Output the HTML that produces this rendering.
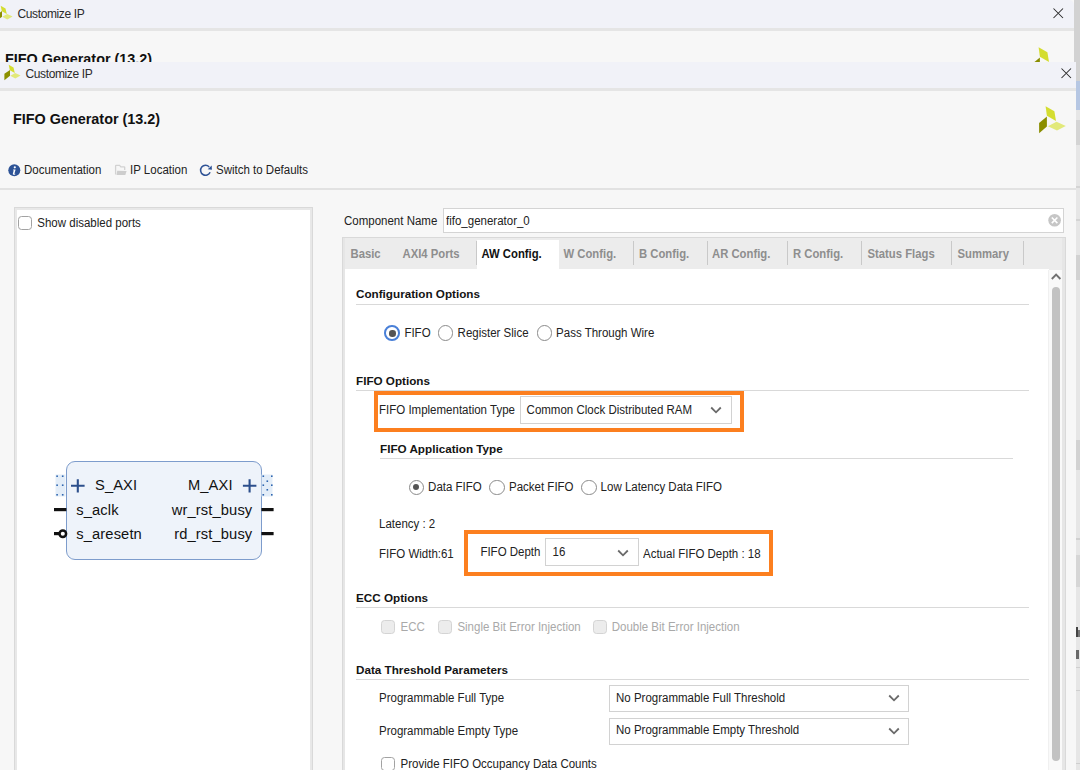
<!DOCTYPE html>
<html><head><meta charset="utf-8">
<style>
*{margin:0;padding:0;box-sizing:border-box}
html,body{width:1080px;height:770px;overflow:hidden;background:#f7f7f7;font-family:"Liberation Sans",sans-serif;color:#222}
.a{position:absolute;white-space:nowrap}
.t{position:absolute;white-space:nowrap;font-size:11.5px;line-height:14px;color:#222;transform:scaleY(1.1);transform-origin:0 11px}
.h{position:absolute;white-space:nowrap;font-size:11.7px;line-height:14px;font-weight:bold;color:#141414}
.tab{position:absolute;white-space:nowrap;font-size:11.3px;line-height:14px;font-weight:bold;color:#8e8e8e;transform:scaleY(1.06);transform-origin:0 10.8px}
.hl{position:absolute;height:1px;background:#d9d9d9}
.dd{position:absolute;background:#fff;border:1px solid #d2d2d2}
.rb{position:absolute;width:15.6px;height:15.6px;border-radius:50%;border:1.4px solid #8a8a8a;background:#fff}
.rb.on::after{content:"";position:absolute;left:3.2px;top:3.2px;width:6.4px;height:6.4px;border-radius:50%;background:#555}
.cb{position:absolute;width:14px;height:14px;border-radius:3.5px;border:1.7px solid #a2a2a2;background:#fff}
.cb.dis{background:#ececec;border-color:#d4d4d4}
.ob{position:absolute;border:4px solid #fc7f1f}
.sep{position:absolute;width:1px;height:24px;background:#c9c9c9;top:241px}
.chev{position:absolute}
.bt{position:absolute;white-space:nowrap;font-size:14.7px;letter-spacing:0.12px;line-height:17px;color:#111}
.br{text-align:right}
</style></head><body>
<!-- background strip right -->
<div class="a" style="left:1074px;top:0;width:6px;height:770px;background:#e6e6e6"></div>
<div class="a" style="left:1074px;top:0;width:6px;height:81px;background:#d2d2d2"></div>
<div class="a" style="left:1076px;top:81px;width:4px;height:29px;background:#b6c7e3"></div>
<div class="a" style="left:1076px;top:120px;width:4px;height:25px;background:#d4d4d4"></div>
<div class="a" style="left:1076px;top:186px;width:4px;height:2px;background:#d4d4d4"></div>
<div class="a" style="left:1076px;top:219px;width:4px;height:2px;background:#d4d4d4"></div>
<div class="a" style="left:1076px;top:255px;width:4px;height:25px;background:#d2d2d2"></div>
<div class="a" style="left:1076px;top:440px;width:4px;height:30px;background:#d2d2d2"></div>
<div class="a" style="left:1076px;top:538px;width:4px;height:2px;background:#d0d0d0"></div>
<div class="a" style="left:1076px;top:555px;width:4px;height:32px;background:#d6d6d6"></div>
<div class="a" style="left:1076px;top:627px;width:1.5px;height:10px;background:#444"></div><div class="a" style="left:1078px;top:630px;width:2px;height:7px;background:#777"></div>
<div class="a" style="left:1076px;top:650px;width:3px;height:9px;background:#6a6a6a"></div>
<div class="a" style="left:1076px;top:667px;width:4px;height:1px;background:#cfcfcf"></div>
<div class="a" style="left:1076px;top:690px;width:4px;height:1px;background:#cfcfcf"></div>
<div class="a" style="left:1076px;top:763px;width:4px;height:1px;background:#cfcfcf"></div>
<!-- BACK WINDOW -->
<div class="a" style="left:0;top:0;width:1074px;height:62px;background:#f7f7f7;border-top-right-radius:5px;overflow:hidden">
  <div class="a" style="left:0;top:0;width:1074px;height:28px;background:#f1f2f8"></div>
  <div class="a" style="left:0;top:28px;width:1074px;height:3px;background:#e5e5e5"></div>
  <svg class="a" style="left:-7.6px;top:0.6px" width="24" height="24" viewBox="0 0 24 24">
    <polygon points="8.7,4.7 13.5,7.6 14.8,12.9 9.8,10.2" fill="#d4dd30"/>
    <polygon points="10,10.1 10,15.8 4.4,20.2 4.4,13.8" fill="#8c9000"/>
    <polygon points="10.3,15.7 15.2,12.9 20.6,15.6 15.3,18.5" fill="#e2e97a"/>
  </svg>
  <div class="a" style="left:17.5px;top:6.9px;font-size:12px;letter-spacing:-0.38px;line-height:14px;color:#2a2a2a">Customize IP</div>
  <svg class="a" style="left:1053px;top:8px" width="11" height="11" viewBox="0 0 11 11"><path d="M0.5,0.5 L10,10 M10,0.5 L0.5,10" stroke="#2a2a2a" stroke-width="1.05"/></svg>
  <div class="a" style="left:5px;top:51.2px;font-size:14.4px;line-height:17px;font-weight:bold;color:#111">FIFO Generator (13.2)</div>
  <svg class="a" style="left:1022.6px;top:40.9px" width="40" height="40" viewBox="0 0 40 40">
    <polygon points="15.6,6.2 24.4,11.2 26,21 16.9,15.8" fill="#d4dd30"/>
    <polygon points="16.9,16.6 16.9,26.5 9.1,33.2 9.1,22.9" fill="#8a8e00"/>
    <polygon points="17.9,26.2 26.5,21.8 35.8,26 27,30.6" fill="#e2e97a"/>
  </svg>
</div>

<!-- FRONT WINDOW base -->
<div class="a" style="left:0;top:62px;width:1076px;height:708px;background:#f7f7f7"></div>
<div class="a" style="left:0;top:62px;width:1076px;height:26px;background:#f1f2f8"></div>
<div class="a" style="left:0;top:88px;width:1076px;height:3px;background:#e5e5e5"></div>
<svg class="a" style="left:0px;top:60px" width="24" height="24" viewBox="0 0 24 24">
    <polygon points="8.7,4.7 13.5,7.6 14.8,12.9 9.8,10.2" fill="#d4dd30"/>
    <polygon points="10,10.1 10,15.8 4.4,20.2 4.4,13.8" fill="#8c9000"/>
    <polygon points="10.3,15.7 15.2,12.9 20.6,15.6 15.3,18.5" fill="#e2e97a"/>
</svg>
<div class="a" style="left:25.5px;top:66.5px;font-size:12px;letter-spacing:-0.38px;line-height:14px;color:#2a2a2a">Customize IP</div>
<svg class="a" style="left:1060.5px;top:67.5px" width="11" height="11" viewBox="0 0 11 11"><path d="M0.5,0.5 L10,10 M10,0.5 L0.5,10" stroke="#2a2a2a" stroke-width="1.05"/></svg>

<div class="a" style="left:13px;top:110.8px;font-size:14.4px;line-height:17px;font-weight:bold;color:#111">FIFO Generator (13.2)</div>
<svg class="a" style="left:1030px;top:100px" width="40" height="40" viewBox="0 0 40 40">
  <polygon points="15.6,6.2 24.4,11.2 26,21 16.9,15.8" fill="#d4dd30"/>
  <polygon points="16.9,16.6 16.9,26.5 9.1,33.2 9.1,22.9" fill="#8a8e00"/>
  <polygon points="17.9,26.2 26.5,21.8 35.8,26 27,30.6" fill="#e2e97a"/>
</svg>

<!-- toolbar -->
<svg class="a" style="left:7.6px;top:163.8px" width="13" height="13" viewBox="0 0 13 13">
  <circle cx="6.3" cy="6.3" r="6" fill="#2d5396"/>
  <circle cx="6.8" cy="3.3" r="1.1" fill="#fff"/>
  <path d="M5.2,5.6 L7.6,5.4 L6.5,9.6 Q6.4,10.2 7.4,9.8 L7.2,10.4 Q5.9,11 5,10.6 Q4.6,10.3 4.9,9.6 L5.7,6.3 L5.1,6.2 Z" fill="#fff"/>
</svg>
<div class="t" style="left:24px;top:162.5px">Documentation</div>
<svg class="a" style="left:110px;top:160px" width="25" height="20" viewBox="0 0 25 20">
  <path d="M5.6,14.5 V5.9 Q5.6,5.4 6.1,5.4 H9.6 L10.8,6.8 H14.2 Q14.7,6.8 14.7,7.3 V10" fill="none" stroke="#d2d2d2" stroke-width="1.3"/>
  <path d="M7.2,10.8 L16.6,10.9 L15.3,15 L6.5,15.1 Z" fill="#cdcdcd"/>
</svg>
<div class="t" style="left:130px;top:162.5px">IP Location</div>
<svg class="a" style="left:196px;top:160px" width="25" height="20" viewBox="0 0 25 20">
  <path d="M13.2,6.9 A4.95,4.95 0 1 0 14.1,12.2" fill="none" stroke="#2f5396" stroke-width="1.55"/>
  <path d="M15.7,5.6 L15.9,9.7 L11.7,9.3 Z" fill="#2f5396"/>
</svg>
<div class="t" style="left:216px;top:162.5px">Switch to Defaults</div>
<div class="a" style="left:0;top:188px;width:1076px;height:2px;background:#e2e2e2"></div>

<!-- left panel -->
<div class="a" style="left:14px;top:207px;width:299px;height:600px;background:#fff;border:1px solid #d9d9d9"></div>
<div class="a" style="left:15px;top:208px;width:297px;height:600px;border:2px solid #e8e8e8"></div>
<div class="cb" style="left:17.9px;top:215.8px"></div>
<div class="t" style="left:37.3px;top:215.7px">Show disabled ports</div>

<!-- block -->
<div class="a" style="left:66px;top:461px;width:196px;height:99px;background:#eef3fa;border:1px solid #7d9ccc;border-radius:9px"></div>
<svg class="a" style="left:54px;top:472px" width="222" height="70" viewBox="0 0 222 70">
  <!-- left handle -->
  <rect x="1.5" y="2.5" width="10" height="22" fill="#e3edf8"/>
  <g fill="#2f66b0">
    <rect x="2.3" y="3.4" width="1.6" height="1.6"/><rect x="7.9" y="3.4" width="1.6" height="1.6"/>
    <rect x="2.3" y="12.4" width="1.6" height="1.6"/><rect x="7.9" y="12.4" width="1.6" height="1.6"/>
    <rect x="2.3" y="22" width="1.6" height="1.6"/><rect x="7.9" y="22" width="1.6" height="1.6"/>
  </g>
  <!-- right handle -->
  <rect x="207.5" y="2.5" width="11" height="22" fill="#e3edf8"/>
  <g fill="#2f66b0">
    <rect x="208.5" y="3.4" width="1.6" height="1.6"/><rect x="217" y="3.4" width="1.6" height="1.6"/>
    <rect x="212.5" y="8.4" width="1.6" height="1.6"/>
    <rect x="208.5" y="12.4" width="1.6" height="1.6"/><rect x="217" y="12.4" width="1.6" height="1.6"/>
    <rect x="212.5" y="17" width="1.6" height="1.6"/>
    <rect x="208.5" y="22" width="1.6" height="1.6"/><rect x="217" y="22" width="1.6" height="1.6"/>
  </g>
  <!-- plus signs -->
  <path d="M17,13.8 H30.6 M23.8,7.3 V20.4" stroke="#2c4f8c" stroke-width="2.1"/>
  <path d="M188.9,13.8 H202.4 M195.6,7.3 V20.4" stroke="#2c4f8c" stroke-width="2.1"/>
  <!-- wires -->
  <rect x="0" y="36" width="12.4" height="3.2" fill="#111"/>
  <rect x="207.4" y="36" width="12.2" height="3.2" fill="#111"/>
  <rect x="207.4" y="60" width="12.2" height="3.2" fill="#111"/>
  <rect x="0" y="60" width="6" height="3.2" fill="#111"/>
  <circle cx="8.8" cy="61.8" r="3.3" fill="#fff" stroke="#111" stroke-width="2.5"/>
</svg>
<div class="bt" style="left:95px;top:477.3px">S_AXI</div>
<div class="bt br" style="right:847.4px;top:477.3px">M_AXI</div>
<div class="bt" style="left:76.3px;top:501.8px">s_aclk</div>
<div class="bt br" style="right:827.7px;top:501.8px">wr_rst_busy</div>
<div class="bt" style="left:76.3px;top:525.7px">s_aresetn</div>
<div class="bt br" style="right:827.7px;top:525.7px">rd_rst_busy</div>

<!-- right side -->
<div class="t" style="left:344px;top:213.9px">Component Name</div>
<div class="a" style="left:443px;top:208px;width:621px;height:25px;background:#fff;border:1px solid #d4d4d4"></div>
<div class="t" style="left:446px;top:213.9px">fifo_generator_0</div>
<svg class="a" style="left:1048px;top:214px" width="14" height="14" viewBox="0 0 14 14">
  <circle cx="6.6" cy="6.3" r="6.3" fill="#c6c6c6"/>
  <path d="M3.8,3.5 L9.4,9.1 M9.4,3.5 L3.8,9.1" stroke="#fff" stroke-width="1.6"/>
</svg>

<!-- tab container -->
<div class="a" style="left:342px;top:237px;width:724px;height:540px;background:#ececec;border:1px solid #d9d9d9"></div>
<div class="a" style="left:343px;top:238px;width:722px;height:540px;border:2px solid #e6e6e6;border-top:none;border-right:3px solid #e6e6e6"></div>
<div class="a" style="left:345px;top:269px;width:704px;height:510px;background:#fff"></div>
<div class="a" style="left:477px;top:240px;width:82px;height:30px;background:#fff"></div>
<div class="sep" style="left:476px"></div>
<div class="sep" style="left:633px"></div>
<div class="sep" style="left:707px"></div>
<div class="sep" style="left:787px"></div>
<div class="sep" style="left:861px"></div>
<div class="sep" style="left:951px"></div>
<div class="sep" style="left:1023px"></div>
<div class="tab" style="left:350.5px;top:246.6px">Basic</div>
<div class="tab" style="left:402.5px;top:246.6px">AXI4 Ports</div>
<div class="tab" style="left:481.5px;top:246.6px;color:#111">AW Config.</div>
<div class="tab" style="left:563.5px;top:246.6px">W Config.</div>
<div class="tab" style="left:639px;top:246.6px">B Config.</div>
<div class="tab" style="left:712px;top:246.6px">AR Config.</div>
<div class="tab" style="left:793px;top:246.6px">R Config.</div>
<div class="tab" style="left:867.5px;top:246.6px">Status Flags</div>
<div class="tab" style="left:957.5px;top:246.6px">Summary</div>

<!-- scrollbar -->
<div class="a" style="left:1048px;top:270px;width:14px;height:500px;background:#f9f9f9;border-left:1px solid #f0f0f0"></div>
<svg class="a" style="left:1050px;top:272px" width="13" height="10" viewBox="0 0 13 10"><path d="M1.8,7 L6.1,2.6 L10.4,7" fill="none" stroke="#707070" stroke-width="1.9"/></svg>
<div class="a" style="left:1051.6px;top:286.8px;width:8px;height:474px;background:#c2c2c2;border-radius:4px"></div>

<div class="h" style="left:356px;top:287.4px">Configuration Options</div>
<div class="hl" style="left:356px;top:304px;width:673px"></div>
<div class="rb on" style="left:384.2px;top:325px;border:2px solid #4a80d8"></div>
<div class="t" style="left:404.4px;top:325.6px">FIFO</div>
<div class="rb" style="left:437.6px;top:325.3px"></div>
<div class="t" style="left:457.6px;top:325.6px">Register Slice</div>
<div class="rb" style="left:536.6px;top:325.3px"></div>
<div class="t" style="left:556.1px;top:325.6px">Pass Through Wire</div>

<div class="h" style="left:356px;top:373.6px">FIFO Options</div>
<div class="hl" style="left:356px;top:390px;width:673px"></div>

<div class="ob" style="left:374px;top:391px;width:370px;height:41px"></div>
<div class="t" style="left:379px;top:402.7px">FIFO Implementation Type</div>
<div class="dd" style="left:520px;top:396px;width:212px;height:28px"></div>
<div class="t" style="left:526.6px;top:402.7px">Common Clock Distributed RAM</div>
<svg class="chev" style="left:709px;top:405px" width="14" height="10" viewBox="0 0 14 10"><path d="M2.2,2.5 L7,7.3 L11.8,2.5" fill="none" stroke="#6a6a6a" stroke-width="1.8"/></svg>

<div class="h" style="left:380px;top:441.8px">FIFO Application Type</div>
<div class="hl" style="left:380px;top:458px;width:633px"></div>
<div class="rb on" style="left:408.5px;top:479.6px"></div>
<div class="t" style="left:428.1px;top:480px">Data FIFO</div>
<div class="rb" style="left:489px;top:479.6px"></div>
<div class="t" style="left:509px;top:480px">Packet FIFO</div>
<div class="rb" style="left:581px;top:479.6px"></div>
<div class="t" style="left:600.6px;top:480px">Low Latency Data FIFO</div>

<div class="t" style="left:379px;top:517.3px">Latency : 2</div>
<div class="t" style="left:379px;top:546.8px">FIFO Width:61</div>

<div class="ob" style="left:464.3px;top:530px;width:308.5px;height:45.6px"></div>
<div class="t" style="left:480.4px;top:544.7px">FIFO Depth</div>
<div class="dd" style="left:545px;top:538px;width:94px;height:28px"></div>
<div class="t" style="left:552.5px;top:544.6px">16</div>
<svg class="chev" style="left:616px;top:547.5px" width="14" height="10" viewBox="0 0 14 10"><path d="M2.2,2.5 L7,7.3 L11.8,2.5" fill="none" stroke="#6a6a6a" stroke-width="1.8"/></svg>
<div class="t" style="left:643px;top:547px">Actual FIFO Depth : 18</div>

<div class="h" style="left:356px;top:590.6px">ECC Options</div>
<div class="hl" style="left:356px;top:607px;width:673px"></div>
<div class="cb dis" style="left:381px;top:619.8px"></div>
<div class="t" style="left:400.6px;top:619.7px;color:#a9a9a9">ECC</div>
<div class="cb dis" style="left:438px;top:619.8px"></div>
<div class="t" style="left:457.4px;top:619.7px;color:#a9a9a9">Single Bit Error Injection</div>
<div class="cb dis" style="left:592.6px;top:619.8px"></div>
<div class="t" style="left:611.7px;top:619.7px;color:#a9a9a9">Double Bit Error Injection</div>

<div class="h" style="left:356px;top:662.5px">Data Threshold Parameters</div>
<div class="hl" style="left:356px;top:679px;width:673px"></div>
<div class="t" style="left:379px;top:690.9px">Programmable Full Type</div>
<div class="t" style="left:379px;top:723.7px">Programmable Empty Type</div>
<div class="dd" style="left:609px;top:685px;width:300px;height:27px"></div>
<div class="dd" style="left:609px;top:717.5px;width:300px;height:27px"></div>
<div class="t" style="left:616px;top:690.9px">No Programmable Full Threshold</div>
<div class="t" style="left:616px;top:723.2px">No Programmable Empty Threshold</div>
<svg class="chev" style="left:886.5px;top:693px" width="14" height="10" viewBox="0 0 14 10"><path d="M2.2,2.5 L7,7.3 L11.8,2.5" fill="none" stroke="#6a6a6a" stroke-width="1.8"/></svg>
<svg class="chev" style="left:886.5px;top:725.5px" width="14" height="10" viewBox="0 0 14 10"><path d="M2.2,2.5 L7,7.3 L11.8,2.5" fill="none" stroke="#6a6a6a" stroke-width="1.8"/></svg>
<div class="cb" style="left:381px;top:756.5px"></div>
<div class="t" style="left:400.6px;top:756.8px">Provide FIFO Occupancy Data Counts</div>

</body></html>
